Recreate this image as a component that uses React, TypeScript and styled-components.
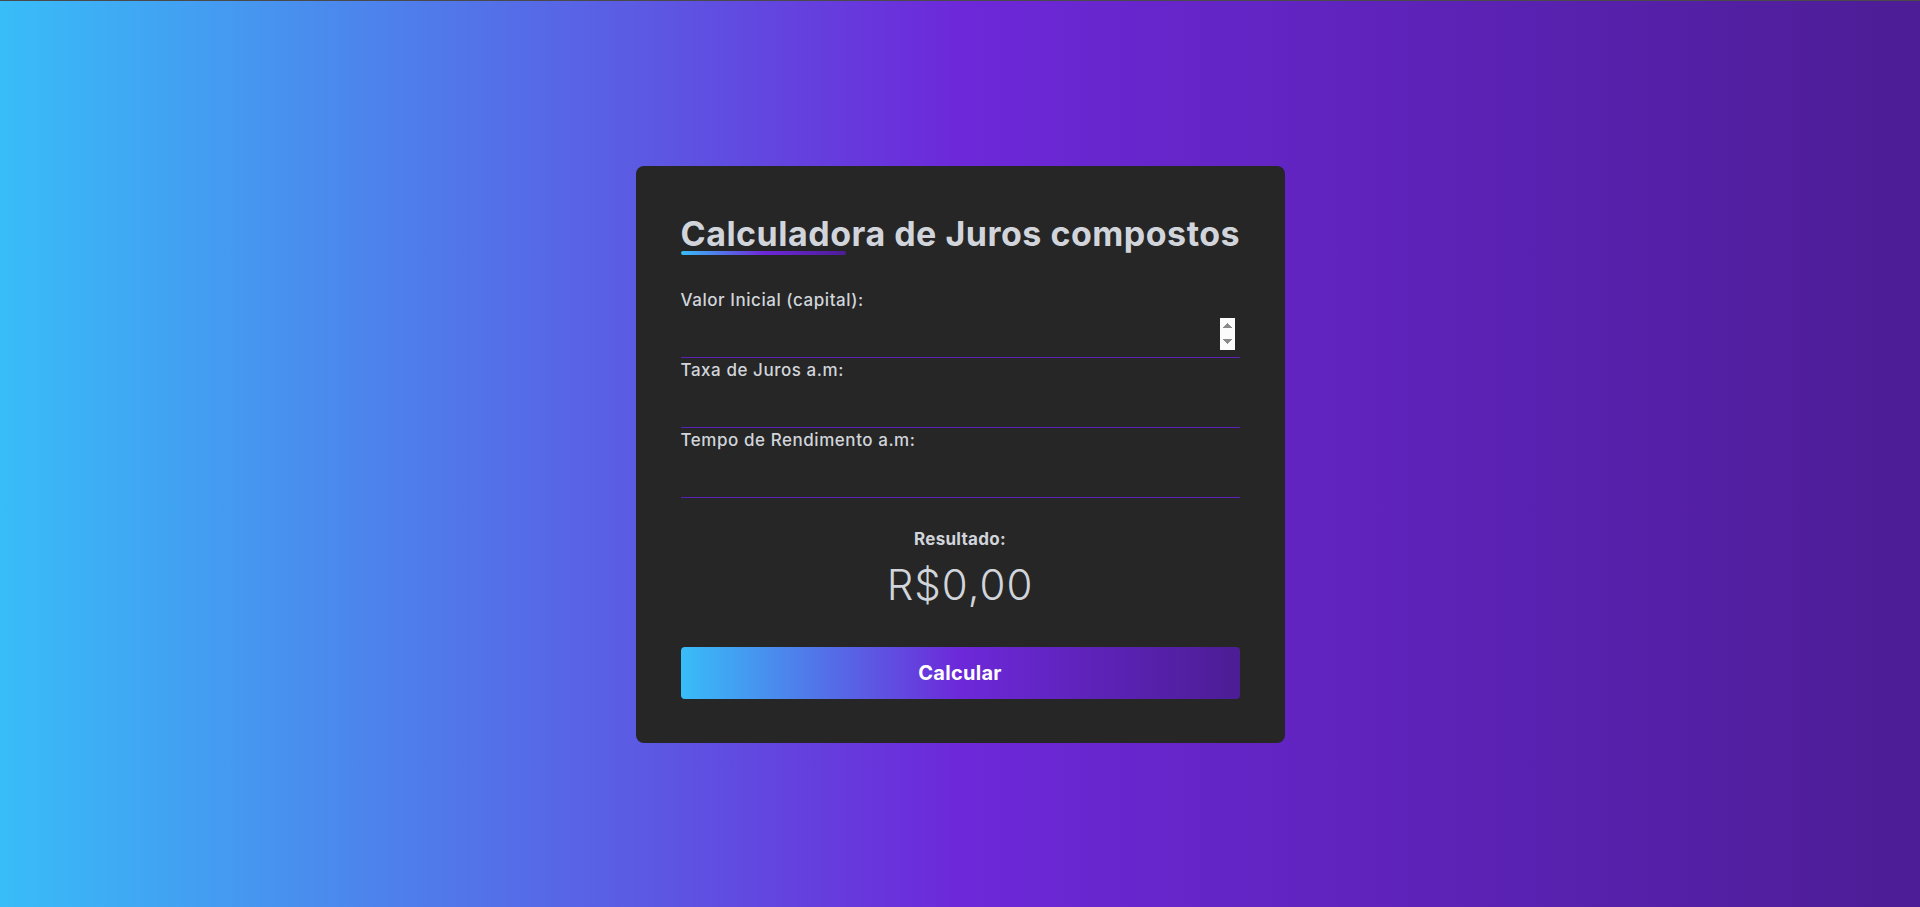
import React from "react";
import styled, { createGlobalStyle } from "styled-components";

const GlobalStyle = createGlobalStyle`
  * { box-sizing: border-box; }
  html, body { margin: 0; padding: 0; height: 100%; }
  body { font-family: Inter, "Noto Sans", sans-serif; color: #d1d5db; }
  #root { height: 100%; }
`;

const Page = styled.main`
  min-height: 100vh;
  display: flex;
  align-items: center;
  justify-content: center;
  border-top: 1px solid #4a4a4a;
  background: linear-gradient(90deg, #38bdf8 0%, #6d28d9 50%, #4c1d95 100%);
`;

const Card = styled.section`
  width: 649px;
  padding: 48px 45px 44px;
  background: #262626;
  border-radius: 8px;
  display: flex;
  flex-direction: column;
`;

const Title = styled.h1`
  margin: 0;
  font-size: 34px;
  line-height: 40px;
  font-weight: 700;
  color: #d1d5db;
  white-space: nowrap;
  letter-spacing: 0.5px;
`;

const TitleBar = styled.div`
  width: 165px;
  height: 4px;
  margin-top: -3px;
  border-radius: 2px;
  background: linear-gradient(90deg, #38bdf8, #6d28d9, #4c1d95);
`;

const Form = styled.form`
  display: flex;
  flex-direction: column;
  margin-top: 33px;
`;

const Field = styled.label`
  display: flex;
  flex-direction: column;
`;

const FieldLabel = styled.span`
  font-size: 17px;
  line-height: 24px;
  font-weight: 500;
  letter-spacing: 0.55px;
  color: #d1d5db;
`;

const Input = styled.input<{ $spin?: boolean }>`
  height: 46px;
  padding: 6px 5px 7px 0;
  border: none;
  border-bottom: 1px solid #5b21b6;
  background: transparent;
  color: #d1d5db;
  font-family: inherit;
  font-size: 16px;
  line-height: 32px;
  outline: none;

  &::-webkit-inner-spin-button {
    opacity: ${(p) => (p.$spin ? 1 : 0)};
    height: 32px;
  }
`;

const Result = styled.div`
  display: flex;
  flex-direction: column;
  align-items: center;
  margin-top: 29px;
`;

const ResultLabel = styled.span`
  font-size: 17px;
  line-height: 24px;
  font-weight: 700;
  letter-spacing: 0.3px;
  color: #d1d5db;
`;

const ResultValue = styled.span`
  margin-top: 9px;
  font-size: 42px;
  line-height: 50px;
  font-weight: 300;
  letter-spacing: 1px;
  color: #d1d5db;
`;

const Button = styled.button`
  margin-top: 37px;
  height: 52px;
  width: 100%;
  border: none;
  border-radius: 4px;
  background: linear-gradient(90deg, #38bdf8 0%, #6d28d9 50%, #4c1d95 100%);
  color: #ffffff;
  font-family: inherit;
  font-size: 20px;
  font-weight: 700;
  letter-spacing: 0.3px;
  cursor: pointer;
`;

export default function App() {
  return (
    <>
      <GlobalStyle />
      <Page>
        <Card>
          <Title>Calculadora de Juros compostos</Title>
          <TitleBar />
          <Form onSubmit={(e) => e.preventDefault()}>
            <Field>
              <FieldLabel>Valor Inicial (capital):</FieldLabel>
              <Input type="number" $spin />
            </Field>
            <Field>
              <FieldLabel>Taxa de Juros a.m:</FieldLabel>
              <Input type="number" />
            </Field>
            <Field>
              <FieldLabel>Tempo de Rendimento a.m:</FieldLabel>
              <Input type="number" />
            </Field>
          </Form>
          <Result>
            <ResultLabel>Resultado:</ResultLabel>
            <ResultValue>R$0,00</ResultValue>
          </Result>
          <Button type="button">Calcular</Button>
        </Card>
      </Page>
    </>
  );
}
